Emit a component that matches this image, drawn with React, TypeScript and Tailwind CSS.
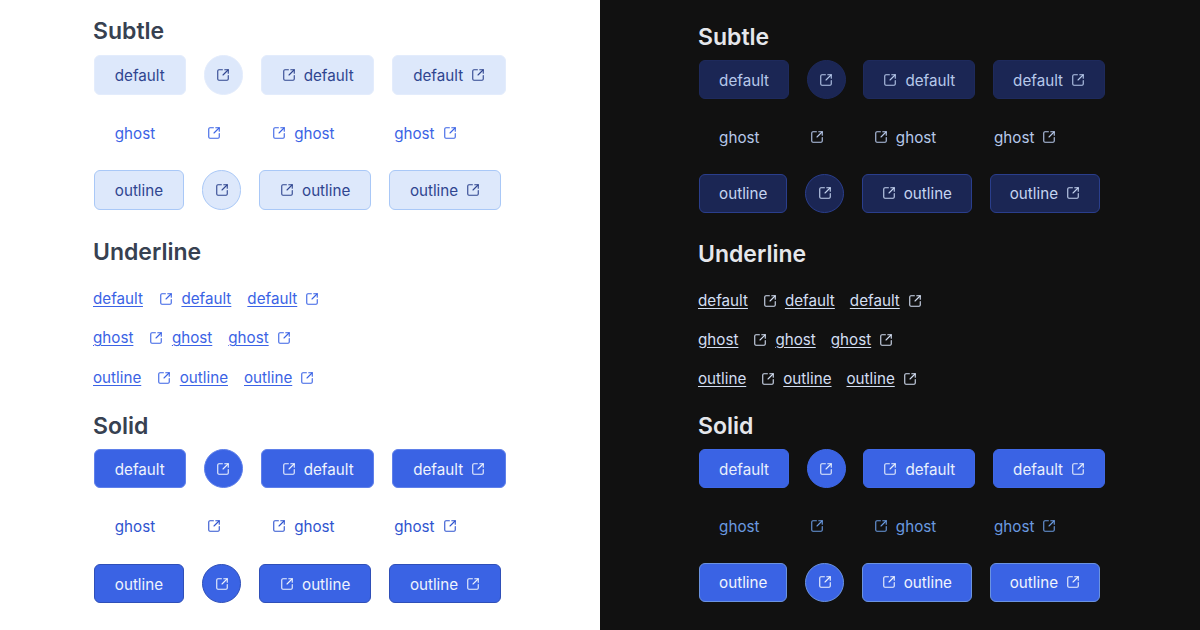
import { SquareArrowOutUpRight } from "lucide-react"

type Metrics = {
  pad: string
  square: string
  top: string
  rowGap: string
  colGap: string
  firstGap: string
  underlineGap: string
  linkGap: string
  linkCol: string
  iconPull: string
  solidGap: string
  solidRowsGap: string
}
type Skin = {
  page: string
  heading: string
  subtle: string
  subtleGhost: string
  subtleOutline: string
  link: string
  solid: string
  solidGhost: string
  solidOutline: string
}

const lightSkin: Skin = {
  page: "bg-white",
  heading: "text-[#374151]",
  subtle: "bg-[#dde8fb] border-[#e3ecfc] text-[#2f4590]",
  subtleGhost: "border-transparent text-[#3b63e5]",
  subtleOutline: "bg-[#dde8fb] border-[#a9c8f7] text-[#2f4590]",
  link: "text-[#3b63e5]",
  solid: "bg-[#3a63e4] border-[#5f80ea] text-[#eef3fd]",
  solidGhost: "border-transparent text-[#2f54cf]",
  solidOutline: "bg-[#3a63e4] border-[#2f4fb8] text-[#eef3fd]",
}

const darkSkin: Skin = {
  page: "bg-[#111111]",
  heading: "text-[#e5e7eb]",
  subtle: "bg-[#1b2654] border-[#1e2a5c] text-[#b6c8ea]",
  subtleGhost: "border-transparent text-[#b6c8ea]",
  subtleOutline: "bg-[#1b2654] border-[#2a3e8c] text-[#c5d4f0]",
  link: "text-[#d3def2]",
  solid: "bg-[#3a63e4] border-[#3f68e6] text-[#e8effc]",
  solidGhost: "border-transparent text-[#6a9ae0]",
  solidOutline: "bg-[#3a63e4] border-[#6b93e0] text-[#f0f4fd]",
}

const lightSize: Metrics = {
  pad: "h-[39.5px] px-[19.8px]",
  square: "h-[39.5px] w-[39.4px]",
  top: "pt-[15px] pl-[93px]",
  rowGap: "gap-y-[18px]",
  colGap: "gap-x-[18px]",
  firstGap: "mt-[8.3px]",
  underlineGap: "mt-[26.2px]",
  linkGap: "gap-y-[15.5px]",
  linkCol: "gap-x-4",
  iconPull: "-mr-[7.5px]",
  solidGap: "mt-[20px]",
  solidRowsGap: "mt-[7px]",
}

const darkSize: Metrics = {
  pad: "h-[39px] px-[19.1px]",
  square: "h-[39px] w-[39px]",
  top: "pt-[21px] pl-[98px]",
  rowGap: "gap-y-[17.8px]",
  colGap: "gap-x-[17.6px]",
  firstGap: "mt-[7.4px]",
  underlineGap: "mt-[25px]",
  linkGap: "gap-y-[15px]",
  linkCol: "gap-x-[15px]",
  iconPull: "-mr-[7px]",
  solidGap: "mt-[19px]",
  solidRowsGap: "mt-[7.3px]",
}

function Icon() {
  return <SquareArrowOutUpRight size={14} strokeWidth={1.9} className="shrink-0" />
}

function Label({ children }: { children: string }) {
  // 2px on top drops the text baseline by one, the icons stay centred
  return <span className="pt-[2px]">{children}</span>
}

function ButtonRow({ label, tone, size }: { label: string; tone: string; size: Metrics }) {
  const base = `flex items-center justify-center gap-2 border ${tone}`
  return (
    <div className={`ml-px flex ${size.colGap}`}>
      <button className={`${base} ${size.pad} rounded-md`}>
        <Label>{label}</Label>
      </button>
      <button className={`${base} ${size.square} rounded-full`}>
        <Icon />
      </button>
      <button className={`${base} ${size.pad} rounded-md`}>
        <Icon />
        <Label>{label}</Label>
      </button>
      <button className={`${base} ${size.pad} rounded-md`}>
        <Label>{label}</Label>
        <Icon />
      </button>
    </div>
  )
}

function LinkRow({ label, tone, size }: { label: string; tone: string; size: Metrics }) {
  return (
    <div className={`flex h-6 items-center ${size.linkCol} ${tone}`}>
      <a className="underline underline-offset-2">{label}</a>
      <a className={size.iconPull}>
        <Icon />
      </a>
      <a className="underline underline-offset-2">{label}</a>
      <a className="flex items-center gap-2">
        <span className="underline underline-offset-2">{label}</span>
        <Icon />
      </a>
    </div>
  )
}

function Panel({ skin, size }: { skin: Skin; size: Metrics }) {
  return (
    <div className={`h-[630px] w-[600px] ${size.top} ${skin.page}`}>
      <h2 className={`text-[23px] leading-8 font-semibold ${skin.heading}`}>Subtle</h2>
      <div className={`${size.firstGap} flex flex-col ${size.rowGap}`}>
        <ButtonRow label="default" tone={skin.subtle} size={size} />
        <ButtonRow label="ghost" tone={skin.subtleGhost} size={size} />
        <ButtonRow label="outline" tone={skin.subtleOutline} size={size} />
      </div>

      <h2 className={`${size.underlineGap} text-[23px] leading-8 font-semibold ${skin.heading}`}>Underline</h2>
      <div className={`mt-[19px] flex flex-col ${size.linkGap}`}>
        <LinkRow label="default" tone={skin.link} size={size} />
        <LinkRow label="ghost" tone={skin.link} size={size} />
        <LinkRow label="outline" tone={skin.link} size={size} />
      </div>

      <h2 className={`${size.solidGap} text-[23px] leading-8 font-semibold ${skin.heading}`}>Solid</h2>
      <div className={`${size.solidRowsGap} flex flex-col ${size.rowGap}`}>
        <ButtonRow label="default" tone={skin.solid} size={size} />
        <ButtonRow label="ghost" tone={skin.solidGhost} size={size} />
        <ButtonRow label="outline" tone={skin.solidOutline} size={size} />
      </div>
    </div>
  )
}

export default function App() {
  return (
    <div className="flex h-[630px] w-[1200px] overflow-hidden font-['Inter',sans-serif] text-[15.2px] leading-6">
      <Panel skin={lightSkin} size={lightSize} />
      <Panel skin={darkSkin} size={darkSize} />
    </div>
  )
}
